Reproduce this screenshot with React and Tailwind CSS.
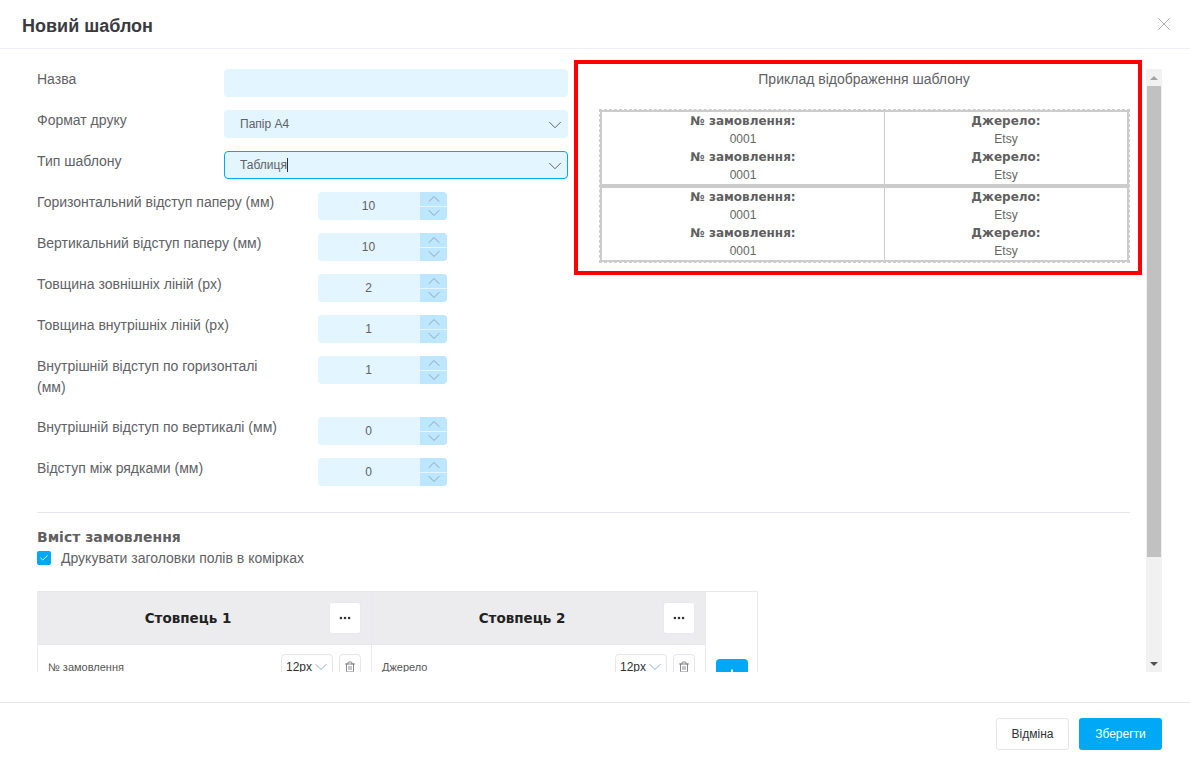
import { X, ChevronDown, ChevronUp, Check, Trash2, Ellipsis, Plus } from 'lucide-react';

const SPINS = [
  { label: 'Горизонтальний відступ паперу (мм)', value: 10 },
  { label: 'Вертикальний відступ паперу (мм)', value: 10 },
  { label: 'Товщина зовнішніх ліній (px)', value: 2 },
  { label: 'Товщина внутрішніх ліній (px)', value: 1 },
  { label: 'Внутрішній відступ по горизонталі (мм)', value: 1 },
  { label: 'Внутрішній відступ по вертикалі (мм)', value: 0 },
  { label: 'Відступ між рядками (мм)', value: 0 },
];

function Label({ children, className = '' }) {
  return <div className={`text-sm leading-[21px] pb-[6px] text-[#606266] ${className}`}>{children}</div>;
}

function SelectRow({ label, value, focused, caret }) {
  return (
    <div className="flex items-start mb-[13px]">
      <Label className="w-[187px] shrink-0">{label}</Label>
      <div className={`flex-1 h-[28px] rounded-[4px] bg-[#e3f5ff] border flex items-center pl-[15px] pr-px text-xs text-[#606266] ${focused ? 'border-[#00a8f5]' : 'border-transparent'}`}>
        <span>{value}</span>
        {caret && <span className="w-px h-[14px] bg-[#303133]" />}
        <ChevronDown className="ml-auto mt-[2px] text-[#555]" size={22} strokeWidth={1} />
      </div>
    </div>
  );
}

function SpinRow({ label, value }) {
  return (
    <div className="flex items-start mb-[13px]">
      <Label className="w-[281px] shrink-0 pr-[35px]">{label}</Label>
      <div className="w-[129px] h-[28px] rounded-[4px] overflow-hidden bg-[#e3f5ff] flex text-xs text-[#606266]">
        <div className="flex-1 flex items-center justify-center pr-px">{value}</div>
        <div className="w-[27px] flex flex-col gap-px">
          <div className="flex-1 bg-[#bde6ff] flex items-center justify-center overflow-hidden text-[#7d9cae]">
            <ChevronUp className="shrink-0" size={20} strokeWidth={1} />
          </div>
          <div className="flex-1 bg-[#bde6ff] flex items-center justify-center overflow-hidden text-[#7d9cae]">
            <ChevronDown className="shrink-0" size={20} strokeWidth={1} />
          </div>
        </div>
      </div>
    </div>
  );
}

function PreviewCell({ title, value, className = '' }) {
  return (
    <div className={`text-center text-xs leading-[18px] text-[#666] ${className}`}>
      <div className="font-bold font-['DejaVu_Sans'] text-[12px] text-[#5f5f5f]">{title}</div>
      <div>{value}</div>
      <div className="font-bold font-['DejaVu_Sans'] text-[12px] text-[#5f5f5f]">{title}</div>
      <div>{value}</div>
    </div>
  );
}

function PreviewRow() {
  return (
    <div className="flex">
      <PreviewCell title="№ замовлення:" value="0001" className="w-[283px] border-r border-[#ccc]" />
      <PreviewCell title="Джерело:" value="Etsy" className="flex-1" />
    </div>
  );
}

function Column({ title, field }) {
  return (
    <div className="w-[334px] border-r border-[#e8e8ee]">
      <div className="h-[53px] bg-[#ececee] border-b border-[#e8e8ee] flex items-center pl-[10px] pr-[10px]">
        <div className="flex-1 text-center text-[13.5px] font-bold font-['DejaVu_Sans'] text-[#222] pr-px">{title}</div>
        <button className="w-[32px] h-[32px] bg-white border border-[#e8e8ee] rounded-[3px] flex items-center justify-center text-[#303133]">
          <Ellipsis size={14} strokeWidth={2.5} />
        </button>
      </div>
      <div className="flex items-center pl-[10px] pr-[10px] pt-[9px]">
        <div className="flex-1 text-[11px] leading-[12px] text-[#555]">{field}</div>
        <div className="w-[52px] h-[26px] border border-[#e4e7ed] rounded-[4px] flex items-center pl-[4px] text-xs leading-[10px] text-[#303133]">
          12px
          <ChevronDown className="ml-[-1px] shrink-0 text-[#7d9cae]" size={20} strokeWidth={1} />
        </div>
        <div className="ml-[6px] w-[22px] h-[26px] border border-[#e4e7ed] rounded-[4px] flex items-center justify-center text-[#606266]">
          <Trash2 size={12} strokeWidth={1.5} />
        </div>
      </div>
    </div>
  );
}

export default function App() {
  return (
    <div className="w-[1190px] h-[761px] bg-white flex flex-col overflow-hidden font-['Liberation_Sans',sans-serif]">
      {/* Header */}
      <div className="h-[49px] shrink-0 border-b border-[#ebeef5] flex items-center justify-between pl-[22px] pr-[15px]">
        <h2 className="text-lg font-bold text-[#3a3a3f] mt-[3px]">Новий шаблон</h2>
        <X className="text-[#a0a3a8]" size={22} strokeWidth={1} />
      </div>

      {/* Body */}
      <div className="h-[623px] shrink-0 flex">
        <div className="w-[1146px] shrink-0 overflow-hidden pl-[37px]">
          <div className="flex items-start">
            <div className="w-[531px] shrink-0 pt-[20px]">
              <div className="flex items-start mb-[13px]">
                <Label className="w-[187px] shrink-0">Назва</Label>
                <div className="flex-1 h-[28px] rounded-[4px] bg-[#e3f5ff]" />
              </div>
              <SelectRow label="Формат друку" value="Папір А4" />
              <SelectRow label="Тип шаблону" value="Таблиця" focused caret />
              {SPINS.map(s => <SpinRow key={s.label} label={s.label} value={s.value} />)}
            </div>
            <div className="ml-[6px] mt-[11px] w-[568px] h-[215px] shrink-0 border-4 border-[#ff0000] px-[21px]">
              <div className="text-center text-sm text-[#606266] leading-[21px] pt-[5px] pl-[12px] h-[45px]">Приклад відображення шаблону</div>
              <div className="w-[531px] border border-dashed border-[#ccc]">
                <div className="border-2 border-[#ccc]">
                  <PreviewRow />
                  <div className="h-[4px] bg-[#ccc]" />
                  <PreviewRow />
                </div>
              </div>
            </div>
          </div>

          <div className="w-[1093px] mt-[13px] border-t border-[#e4e7ed] pt-[15px]">
            <div className="text-sm font-bold font-['DejaVu_Sans'] text-[#5f5f5f] leading-[18px]">Вміст замовлення</div>
            <div className="flex items-center mt-[1px] h-[22px]">
              <div className="w-[14px] h-[14px] rounded-[2px] bg-[#00a8f5] flex items-center justify-center">
                <Check className="text-white" size={10} strokeWidth={2} />
              </div>
              <span className="ml-[10px] text-sm text-[#606266]">Друкувати заголовки полів в комірках</span>
            </div>
            <div className="mt-[22px] inline-flex border border-[#e8e8ee] h-[120px]">
              <Column title="Стовпець 1" field="№ замовлення" />
              <Column title="Стовпець 2" field="Джерело" />
              <div className="w-[51px] flex justify-center pt-[67px]">
                <button className="w-[32px] h-[32px] rounded-[4px] bg-[#00a8f5] flex items-center justify-center text-white">
                  <Plus size={16} strokeWidth={3} />
                </button>
              </div>
            </div>
          </div>
        </div>

        {/* Scrollbar */}
        <div className="w-[16px] h-[603px] mt-[20px] bg-[#f1f1f1] flex flex-col shrink-0">
          <div className="h-[17px] flex items-center justify-center">
            <div className="w-0 h-0 border-x-[4px] border-x-transparent border-b-[4px] border-b-[#a3a3a3]" />
          </div>
          <div className="mx-px h-[471px] bg-[#c1c1c1]" />
          <div className="mt-auto h-[17px] flex items-center justify-center">
            <div className="w-0 h-0 border-x-[4px] border-x-transparent border-t-[4px] border-t-[#505050]" />
          </div>
        </div>
      </div>

      {/* Footer */}
      <div className="flex-1 border-t border-[#e9e9ec] mt-[30px] flex items-start justify-end pt-[15px] pr-[28px] gap-[10px] text-xs">
        <button className="w-[73px] h-[32px] rounded-[3px] border border-[#e4e7ed] bg-white text-[#303133]">Відміна</button>
        <button className="w-[83px] h-[32px] rounded-[3px] bg-[#00a8f5] text-white">Зберегти</button>
      </div>
    </div>
  );
}
